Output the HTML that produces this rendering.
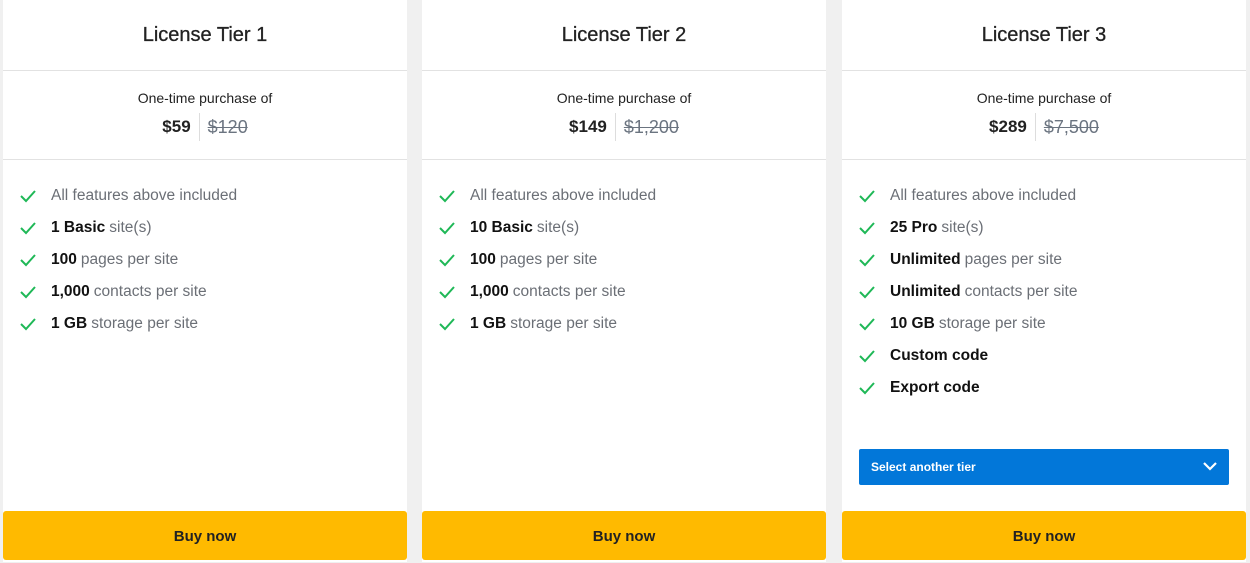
<!DOCTYPE html>
<html><head><style>
*{box-sizing:border-box;margin:0;padding:0}
body{width:1250px;height:562px;background:#f0f0f0;font-family:"Liberation Sans",sans-serif;position:relative;overflow:hidden}
.card{position:absolute;top:0;width:404px;height:562px;background:#fff}
.title{height:71px;border-bottom:1px solid #e2e2e2;text-align:center;font-size:20px;line-height:70px;color:#222;-webkit-text-stroke:0.3px #222}
.price{height:89px;border-bottom:1px solid #e2e2e2;text-align:center;padding-top:19px}
.price .lbl{font-size:14px;color:#222;line-height:17px}
.price .row{margin-top:6px;display:flex;justify-content:center;align-items:center}
.price b{font-size:17px;color:#222;padding-right:8px;line-height:28px}
.price s{font-size:18px;color:#6b7480;border-left:1px solid #ddd;padding-left:8px;line-height:28px}
ul{list-style:none;padding:20px 0 0 16px}
li{height:32px;font-size:15.5px;color:#6b6f76;display:flex;align-items:center}
li b{color:#111;margin-right:4px}
li svg{width:18px;height:14px;margin-right:14px}
.buy{position:absolute;left:0;right:0;top:511px;height:49px;background:#ffba00;border-radius:3px;text-align:center;line-height:52px;font-weight:bold;font-size:15px;color:#222}
.sel{position:absolute;left:17px;top:449px;width:370px;height:36px;background:#0277d9;border-radius:2px;color:#fff;font-weight:bold;font-size:12px;line-height:36px;padding-left:12px}
.sel svg{position:absolute;right:12px;top:13px}
</style></head><body>
<div class="card" style="left:3px">
<div class="title">License Tier 1</div>
<div class="price"><div class="lbl">One-time purchase of</div><div class="row"><b>$59</b><s>$120</s></div></div>
<ul>
<li><svg viewBox="0 0 18 14"><path d="M2 7l5 5L16 2" stroke="#1fb857" stroke-width="2" fill="none"/></svg>All features above included</li>
<li><svg viewBox="0 0 18 14"><path d="M2 7l5 5L16 2" stroke="#1fb857" stroke-width="2" fill="none"/></svg><b>1 Basic</b>site(s)</li>
<li><svg viewBox="0 0 18 14"><path d="M2 7l5 5L16 2" stroke="#1fb857" stroke-width="2" fill="none"/></svg><b>100</b>pages per site</li>
<li><svg viewBox="0 0 18 14"><path d="M2 7l5 5L16 2" stroke="#1fb857" stroke-width="2" fill="none"/></svg><b>1,000</b>contacts per site</li>
<li><svg viewBox="0 0 18 14"><path d="M2 7l5 5L16 2" stroke="#1fb857" stroke-width="2" fill="none"/></svg><b>1 GB</b>storage per site</li>
</ul>
<div class="buy">Buy now</div>
</div>
<div class="card" style="left:422px">
<div class="title">License Tier 2</div>
<div class="price"><div class="lbl">One-time purchase of</div><div class="row"><b>$149</b><s>$1,200</s></div></div>
<ul>
<li><svg viewBox="0 0 18 14"><path d="M2 7l5 5L16 2" stroke="#1fb857" stroke-width="2" fill="none"/></svg>All features above included</li>
<li><svg viewBox="0 0 18 14"><path d="M2 7l5 5L16 2" stroke="#1fb857" stroke-width="2" fill="none"/></svg><b>10 Basic</b>site(s)</li>
<li><svg viewBox="0 0 18 14"><path d="M2 7l5 5L16 2" stroke="#1fb857" stroke-width="2" fill="none"/></svg><b>100</b>pages per site</li>
<li><svg viewBox="0 0 18 14"><path d="M2 7l5 5L16 2" stroke="#1fb857" stroke-width="2" fill="none"/></svg><b>1,000</b>contacts per site</li>
<li><svg viewBox="0 0 18 14"><path d="M2 7l5 5L16 2" stroke="#1fb857" stroke-width="2" fill="none"/></svg><b>1 GB</b>storage per site</li>
</ul>
<div class="buy">Buy now</div>
</div>
<div class="card" style="left:842px">
<div class="title">License Tier 3</div>
<div class="price"><div class="lbl">One-time purchase of</div><div class="row"><b>$289</b><s>$7,500</s></div></div>
<ul>
<li><svg viewBox="0 0 18 14"><path d="M2 7l5 5L16 2" stroke="#1fb857" stroke-width="2" fill="none"/></svg>All features above included</li>
<li><svg viewBox="0 0 18 14"><path d="M2 7l5 5L16 2" stroke="#1fb857" stroke-width="2" fill="none"/></svg><b>25 Pro</b>site(s)</li>
<li><svg viewBox="0 0 18 14"><path d="M2 7l5 5L16 2" stroke="#1fb857" stroke-width="2" fill="none"/></svg><b>Unlimited</b>pages per site</li>
<li><svg viewBox="0 0 18 14"><path d="M2 7l5 5L16 2" stroke="#1fb857" stroke-width="2" fill="none"/></svg><b>Unlimited</b>contacts per site</li>
<li><svg viewBox="0 0 18 14"><path d="M2 7l5 5L16 2" stroke="#1fb857" stroke-width="2" fill="none"/></svg><b>10 GB</b>storage per site</li>
<li><svg viewBox="0 0 18 14"><path d="M2 7l5 5L16 2" stroke="#1fb857" stroke-width="2" fill="none"/></svg><b>Custom code</b></li>
<li><svg viewBox="0 0 18 14"><path d="M2 7l5 5L16 2" stroke="#1fb857" stroke-width="2" fill="none"/></svg><b>Export code</b></li>
</ul>
<div class="sel">Select another tier<svg width="14" height="9" viewBox="0 0 14 9"><path d="M1 1l6 6 6-6" stroke="#fff" stroke-width="2.2" fill="none"/></svg></div>
<div class="buy">Buy now</div>
</div>
</body></html>
